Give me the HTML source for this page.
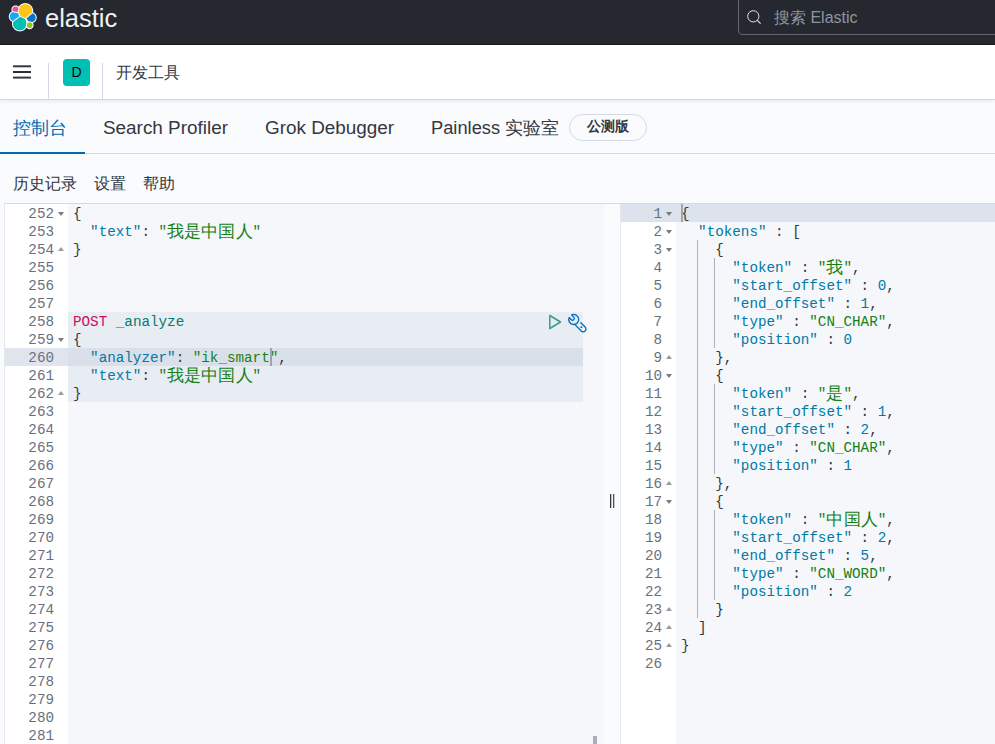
<!DOCTYPE html>
<html><head><meta charset="utf-8">
<style>
*{box-sizing:border-box;margin:0;padding:0}
html,body{width:995px;height:744px;overflow:hidden;background:#fafbfd;font-family:"Liberation Sans",sans-serif;color:#343741}
.abs{position:absolute}
#top{position:absolute;left:0;top:0;width:995px;height:45px;background:#25282f;border-bottom:1px solid #1a1c21}
#logo{position:absolute;left:8px;top:3px;width:30px;height:30px}
#brand{position:absolute;left:45px;top:3px;font-size:25.5px;color:#f0f0f0;line-height:30px;letter-spacing:0px}
#search{position:absolute;left:738px;top:-4px;width:270px;height:39px;border:1px solid #62666e;border-radius:4px;background:#25282f;box-shadow:inset 0 5px 0 -4px #34373f}
#search svg{position:absolute;left:8px;top:13px}
#search span{position:absolute;left:35px;top:10.5px;font-size:16px;color:#8e95a1;line-height:20px}
#bar{position:absolute;left:0;top:45px;width:995px;height:55px;background:#fff;border-bottom:1px solid #d3dae6;box-shadow:0 1px 4px rgba(0,0,0,.09)}
#ham{position:absolute;left:13px;top:20px;width:18px;height:14px}
#ham i{position:absolute;left:0;width:18px;height:2px;background:#343741;border-radius:1px}
.sep{position:absolute;top:18px;width:1px;height:37px;background:#d3dae6}
#av{position:absolute;left:63px;top:14px;width:27px;height:27px;background:#00bfb3;border-radius:4px;color:#000;font-size:14px;line-height:27px;text-align:center}
#crumb{position:absolute;left:116px;top:18px;font-size:16px;line-height:20px;color:#343741}
#tabs{position:absolute;left:0;top:100px;width:995px;height:54px;border-bottom:1px solid #d3dae6}
.tab{position:absolute;top:16px;font-size:18.9px;line-height:24px;color:#343741;white-space:nowrap}
.tab.sel{color:#006bb4}
#uline{position:absolute;left:0;top:52px;width:85px;height:2px;background:#006bb4}
#badge{position:absolute;left:569px;top:14px;width:78px;height:27px;border:1px solid #d3dae6;border-radius:14px;font-size:13.5px;font-weight:bold;line-height:24px;text-align:center;color:#343741;background:#fafbfd}
.sub{position:absolute;top:174px;font-size:16px;line-height:20px;color:#343741}
#ed{position:absolute;left:4px;top:203px;width:991px;height:541px;border-top:1px solid #d3dae6;border-left:1px solid #e3e7ee}
#lgut{position:absolute;left:5px;top:204px;width:63px;height:540px;background:#fff}
#lcon{position:absolute;left:68px;top:204px;width:536px;height:540px;background:#f5f7fa;overflow:hidden}
#mid{position:absolute;left:604px;top:204px;width:16px;height:540px;background:#fafbfd}
#rgut{position:absolute;left:621px;top:204px;width:55px;height:540px;background:#fff}
#rb{position:absolute;left:620px;top:204px;width:1px;height:540px;background:#e3e7ee}
#rcon{position:absolute;left:676px;top:204px;width:319px;height:540px;background:#f5f7fa;overflow:hidden}
.mono{font-family:"Liberation Mono",monospace;font-size:14.25px}
.gl{position:absolute;left:0;width:100%;height:18px;line-height:18px;text-align:right;color:#69707d;font-family:"Liberation Mono",monospace;font-size:14.25px}
.gl{padding-right:14px}

.gl b{position:absolute;right:4px;top:7px;width:0;height:0;border-left:3px solid transparent;border-right:3px solid transparent}
.gl b.fd{border-top:4px solid #7b7b7b}
.gl b.fu{border-bottom:4px solid #9a9a9a;top:6px}
.ln{position:absolute;left:5px;height:18px;line-height:18px;white-space:pre;font-family:"Liberation Mono",monospace;font-size:14.25px;color:#343741}
.w{font-style:normal;display:inline-block;width:17.1px;text-align:center;font-size:16.5px;line-height:18px;vertical-align:top;position:relative;top:1px}
.k{color:#0079a5}
.s{color:#168016}
.p{color:#343741}
.n{color:#0079a5}
.m{color:#cc0c60}
.u{color:#017d73}
.cur{display:inline-block;width:0;height:18px;vertical-align:top;margin-top:-1px;position:relative}.cur:after{content:"";position:absolute;left:0;top:0;width:2px;height:18px;background:#9ea4ad}
.ig{position:absolute;width:1px;background:#abb2bd;margin-left:4px}
#reqhl{position:absolute;left:68px;top:312px;width:515px;height:90px;background:#e8ecf3}
#acthl{position:absolute;left:5px;top:348px;width:578px;height:18px;background:linear-gradient(to right,#e0e5ed 0,#e0e5ed 63px,#d9e0e9 63px)}
#r1hl{position:absolute;left:621px;top:204px;width:374px;height:18px;background:#dde3ec}
</style></head><body>
<div id="top">
 <svg class="abs" style="left:0;top:0" width="45" height="40" viewBox="0 0 45 40"><path d="M11.82 11.41 L11.42 11.65 L11.34 11.71 L10.96 11.99 L10.88 12.05 L10.53 12.36 L10.46 12.43 L10.15 12.78 L10.09 12.86 L9.81 13.24 L9.75 13.32 L9.51 13.72 L9.46 13.81 L9.26 14.24 L9.22 14.33 L9.07 14.77 L9.04 14.86 L8.92 15.32 L8.90 15.42 L8.83 15.88 L8.82 15.98 L8.80 16.45 L8.80 16.55 L8.82 17.02 L8.83 17.12 L8.90 17.58 L8.92 17.68 L9.04 18.14 L9.07 18.23 L9.22 18.67 L9.26 18.76 L9.46 19.19 L9.51 19.28 L9.75 19.68 L9.81 19.76 L10.09 20.14 L10.15 20.22 L10.46 20.57 L10.53 20.64 L10.88 20.95 L10.96 21.01 L11.34 21.29 L11.42 21.35 L11.82 21.59 L11.91 21.64 L12.22 21.78 L12.16 22.03 L12.14 22.13 L12.04 22.79 L12.03 22.88 L12.00 23.55 L12.00 23.65 L12.03 24.32 L12.04 24.41 L12.14 25.07 L12.16 25.17 L12.32 25.82 L12.35 25.91 L12.58 26.54 L12.61 26.63 L12.90 27.23 L12.95 27.32 L13.29 27.89 L13.34 27.97 L13.74 28.51 L13.80 28.59 L14.25 29.08 L14.32 29.15 L14.81 29.60 L14.89 29.66 L15.43 30.06 L15.51 30.11 L16.08 30.45 L16.17 30.50 L16.77 30.79 L16.86 30.82 L17.49 31.05 L17.58 31.08 L18.23 31.24 L18.33 31.26 L18.99 31.36 L19.08 31.37 L19.75 31.40 L19.85 31.40 L20.52 31.37 L20.61 31.36 L21.27 31.26 L21.37 31.24 L22.02 31.08 L22.11 31.05 L22.74 30.82 L22.83 30.79 L23.43 30.50 L23.52 30.45 L24.09 30.11 L24.17 30.06 L24.71 29.66 L24.79 29.60 L25.28 29.15 L25.35 29.08 L25.80 28.59 L25.86 28.51 L26.26 27.97 L26.31 27.89 L26.45 27.66 L26.48 27.70 L26.54 27.77 L26.74 27.99 L26.81 28.06 L27.03 28.26 L27.10 28.32 L27.34 28.50 L27.42 28.55 L27.67 28.70 L27.76 28.75 L28.02 28.88 L28.12 28.91 L28.39 29.01 L28.49 29.04 L28.77 29.11 L28.87 29.13 L29.16 29.17 L29.26 29.18 L29.55 29.20 L29.65 29.20 L29.94 29.18 L30.04 29.17 L30.33 29.13 L30.43 29.11 L30.71 29.04 L30.81 29.01 L31.08 28.91 L31.18 28.88 L31.44 28.75 L31.53 28.70 L31.78 28.55 L31.86 28.50 L32.10 28.32 L32.17 28.26 L32.39 28.06 L32.46 27.99 L32.66 27.77 L32.72 27.70 L32.90 27.46 L32.95 27.38 L33.10 27.13 L33.15 27.04 L33.28 26.78 L33.31 26.68 L33.41 26.41 L33.44 26.31 L33.51 26.03 L33.53 25.93 L33.57 25.64 L33.58 25.54 L33.60 25.25 L33.60 25.15 L33.58 24.86 L33.57 24.76 L33.53 24.47 L33.51 24.37 L33.44 24.09 L33.41 23.99 L33.31 23.72 L33.28 23.62 L33.15 23.36 L33.10 23.27 L32.95 23.02 L32.90 22.94 L32.83 22.85 L32.84 22.85 L33.26 22.70 L33.35 22.66 L33.75 22.47 L33.84 22.43 L34.21 22.20 L34.30 22.14 L34.65 21.88 L34.73 21.82 L35.05 21.52 L35.12 21.45 L35.42 21.13 L35.48 21.05 L35.74 20.70 L35.80 20.61 L36.03 20.24 L36.07 20.15 L36.26 19.75 L36.30 19.66 L36.45 19.24 L36.48 19.15 L36.58 18.72 L36.60 18.62 L36.67 18.19 L36.68 18.09 L36.70 17.65 L36.70 17.55 L36.68 17.11 L36.67 17.01 L36.60 16.58 L36.58 16.48 L36.48 16.05 L36.45 15.96 L36.30 15.54 L36.26 15.45 L36.07 15.05 L36.03 14.96 L35.80 14.59 L35.74 14.50 L35.48 14.15 L35.42 14.07 L35.12 13.75 L35.05 13.68 L34.73 13.38 L34.65 13.32 L34.30 13.06 L34.21 13.00 L33.84 12.77 L33.75 12.73 L33.35 12.54 L33.26 12.50 L33.07 12.43 L33.16 11.82 L33.17 11.73 L33.20 11.05 L33.20 10.95 L33.17 10.27 L33.16 10.18 L33.06 9.51 L33.04 9.41 L32.87 8.75 L32.84 8.66 L32.62 8.02 L32.58 7.93 L32.29 7.32 L32.24 7.23 L31.89 6.65 L31.84 6.57 L31.44 6.03 L31.37 5.95 L30.92 5.45 L30.85 5.38 L30.35 4.93 L30.27 4.86 L29.73 4.46 L29.65 4.41 L29.07 4.06 L28.98 4.01 L28.37 3.72 L28.28 3.68 L27.64 3.46 L27.55 3.43 L26.89 3.26 L26.79 3.24 L26.12 3.14 L26.03 3.13 L25.35 3.10 L25.25 3.10 L24.57 3.13 L24.48 3.14 L23.81 3.24 L23.71 3.26 L23.05 3.43 L22.96 3.46 L22.32 3.68 L22.23 3.72 L21.62 4.01 L21.53 4.06 L20.95 4.41 L20.87 4.46 L20.33 4.86 L20.25 4.93 L19.75 5.38 L19.68 5.45 L19.23 5.95 L19.16 6.03 L18.76 6.57 L18.71 6.65 L18.66 6.73 L18.60 6.67 L18.53 6.60 L18.30 6.39 L18.23 6.32 L17.97 6.14 L17.89 6.08 L17.62 5.92 L17.54 5.87 L17.25 5.74 L17.16 5.70 L16.87 5.60 L16.77 5.57 L16.47 5.49 L16.37 5.47 L16.06 5.43 L15.96 5.42 L15.65 5.40 L15.55 5.40 L15.24 5.42 L15.14 5.43 L14.83 5.47 L14.73 5.49 L14.43 5.57 L14.33 5.60 L14.04 5.70 L13.95 5.74 L13.66 5.87 L13.58 5.92 L13.31 6.08 L13.23 6.14 L12.97 6.32 L12.90 6.39 L12.67 6.60 L12.60 6.67 L12.39 6.90 L12.32 6.97 L12.14 7.23 L12.08 7.31 L11.92 7.58 L11.87 7.66 L11.74 7.95 L11.70 8.04 L11.60 8.33 L11.57 8.43 L11.49 8.73 L11.47 8.83 L11.43 9.14 L11.42 9.24 L11.40 9.55 L11.40 9.65 L11.42 9.96 L11.43 10.06 L11.47 10.37 L11.49 10.47 L11.57 10.77 L11.60 10.87 L11.70 11.16 L11.74 11.25 L11.82 11.41Z" fill="#fff"/><path d="M17.38 6.94 L17.11 6.78 L16.82 6.64 L16.53 6.54 L16.22 6.46 L15.91 6.42 L15.60 6.40 L15.29 6.42 L14.98 6.46 L14.67 6.54 L14.38 6.64 L14.09 6.78 L13.82 6.94 L13.57 7.13 L13.34 7.34 L13.13 7.57 L12.94 7.82 L12.78 8.09 L12.64 8.38 L12.54 8.67 L12.46 8.98 L12.42 9.29 L12.40 9.60 L12.42 9.91 L12.46 10.22 L12.54 10.53 L12.64 10.82 L12.78 11.11 L12.89 11.30 L17.72 12.00 L17.78 11.94 L18.35 7.98 L18.26 7.82 L18.07 7.57 L17.86 7.34 L17.63 7.13 L17.38 6.94Z" fill="#f04e98"/><path d="M31.39 7.75 L31.04 7.17 L30.63 6.62 L30.18 6.12 L29.68 5.67 L29.13 5.26 L28.55 4.91 L27.94 4.63 L27.30 4.40 L26.65 4.23 L25.98 4.13 L25.30 4.10 L24.62 4.13 L23.95 4.23 L23.30 4.40 L22.66 4.63 L22.05 4.91 L21.47 5.26 L20.92 5.67 L20.42 6.12 L19.97 6.62 L19.56 7.17 L19.46 7.35 L18.71 12.48 L20.47 15.90 L25.02 17.89 L25.30 17.90 L25.82 17.87 L32.08 12.28 L32.17 11.68 L32.20 11.00 L32.17 10.32 L32.07 9.65 L31.90 9.00 L31.67 8.36 L31.39 7.75Z" fill="#fec514"/><path d="M12.34 12.27 L11.93 12.51 L11.55 12.79 L11.21 13.11 L10.89 13.45 L10.61 13.83 L10.37 14.24 L10.17 14.66 L10.01 15.11 L9.89 15.56 L9.82 16.03 L9.80 16.50 L9.82 16.97 L9.89 17.44 L10.01 17.89 L10.17 18.34 L10.37 18.76 L10.61 19.17 L10.89 19.55 L11.21 19.89 L11.55 20.21 L11.93 20.49 L12.34 20.73 L12.76 20.93 L12.87 20.97 L19.39 16.20 L19.38 16.03 L19.36 15.94 L17.87 13.03 L12.40 12.24 L12.34 12.27Z" fill="#1ba9f5"/><path d="M35.17 15.48 L34.94 15.10 L34.68 14.75 L34.38 14.42 L34.05 14.12 L33.70 13.86 L33.32 13.63 L32.92 13.44 L32.51 13.29 L32.46 13.28 L26.77 18.37 L26.79 18.48 L26.89 18.91 L27.04 19.32 L27.23 19.72 L27.46 20.10 L27.72 20.45 L28.02 20.78 L28.35 21.08 L28.57 21.24 L32.15 22.00 L32.51 21.91 L32.92 21.76 L33.32 21.57 L33.70 21.34 L34.05 21.08 L34.38 20.78 L34.68 20.45 L34.94 20.10 L35.17 19.72 L35.36 19.32 L35.51 18.91 L35.61 18.48 L35.68 18.04 L35.70 17.60 L35.68 17.16 L35.61 16.72 L35.51 16.29 L35.36 15.88 L35.17 15.48Z" fill="#0077cc"/><path d="M25.80 20.39 L25.45 19.82 L25.06 19.29 L24.62 18.80 L20.17 16.86 L13.21 21.96 L13.13 22.27 L13.03 22.93 L13.00 23.60 L13.03 24.27 L13.13 24.93 L13.29 25.57 L13.52 26.20 L13.80 26.81 L14.15 27.38 L14.54 27.91 L14.99 28.41 L15.49 28.86 L16.02 29.25 L16.59 29.60 L17.20 29.88 L17.83 30.11 L18.47 30.27 L19.13 30.37 L19.80 30.40 L20.47 30.37 L21.13 30.27 L21.77 30.11 L22.40 29.88 L23.01 29.60 L23.58 29.25 L24.11 28.86 L24.61 28.41 L25.06 27.91 L25.45 27.38 L25.66 27.03 L26.45 22.20 L26.31 21.63 L26.08 21.00 L25.80 20.39Z" fill="#00bfb3"/><path d="M32.25 23.79 L32.09 23.53 L31.92 23.30 L31.72 23.08 L31.51 22.88 L28.79 22.31 L28.73 22.33 L28.45 22.43 L28.19 22.55 L27.93 22.71 L27.70 22.88 L27.48 23.08 L27.29 23.29 L26.80 26.27 L26.83 26.35 L26.95 26.61 L27.11 26.87 L27.28 27.10 L27.48 27.32 L27.70 27.52 L27.93 27.69 L28.19 27.85 L28.45 27.97 L28.73 28.07 L29.01 28.14 L29.31 28.19 L29.60 28.20 L29.89 28.19 L30.19 28.14 L30.47 28.07 L30.75 27.97 L31.01 27.85 L31.27 27.69 L31.50 27.52 L31.72 27.32 L31.92 27.10 L32.09 26.87 L32.25 26.61 L32.37 26.35 L32.47 26.07 L32.54 25.79 L32.59 25.49 L32.60 25.20 L32.59 24.91 L32.54 24.61 L32.47 24.33 L32.37 24.05 L32.25 23.79Z" fill="#93c90e"/></svg>
 <div id="brand">elastic</div>
 <div id="search">
  <svg width="16" height="16" viewBox="0 0 16 16"><circle cx="6.3" cy="6.3" r="5.6" fill="none" stroke="#dfe5ef" stroke-width="1"/><path d="M10.3 10.3 L13.6 13.6" stroke="#dfe5ef" stroke-width="1.1"/></svg>
  <span>搜索 Elastic</span>
 </div>
</div>
<div id="bar">
 <svg class="abs" style="left:13px;top:18px" width="18" height="16" viewBox="0 0 18 16"><rect x="0" y="2.3" width="18" height="2" fill="#343741"/><rect x="0" y="8" width="18" height="2" fill="#2b2e36"/><rect x="0" y="13.6" width="18" height="2" fill="#343741"/></svg>
 <div class="sep" style="left:48px"></div>
 <div id="av">D</div>
 <div class="sep" style="left:102px"></div>
 <div id="crumb">开发工具</div>
</div>
<div id="tabs">
 <div class="tab sel" style="left:13px;font-size:18.2px">控制台</div>
 <div class="tab" style="left:103px">Search Profiler</div>
 <div class="tab" style="left:265px">Grok Debugger</div>
 <div class="tab" style="left:431px;font-size:18.3px">Painless</div><div class="tab" style="left:505px;font-size:17.8px">实验室</div>
 <div id="badge">公测版</div>
 <div id="uline"></div>
</div>
<div class="sub" style="left:13px">历史记录</div>
<div class="sub" style="left:94px">设置</div>
<div class="sub" style="left:143px">帮助</div>
<div id="ed"></div>
<div id="lgut"></div>
<div id="lcon"></div>
<div id="mid"></div>
<div id="rb"></div>
<div id="rgut"></div>
<div id="rcon"></div>
<div id="reqhl"></div>
<div id="acthl"></div>
<div id="r1hl"></div>
<div class="abs" style="left:5px;top:204px;width:63px;height:540px"><div class="gl" style="top:1px">252<b class="fd"></b></div><div class="gl" style="top:19px">253</div><div class="gl" style="top:37px">254<b class="fu"></b></div><div class="gl" style="top:55px">255</div><div class="gl" style="top:73px">256</div><div class="gl" style="top:91px">257</div><div class="gl" style="top:109px">258</div><div class="gl" style="top:127px">259<b class="fd"></b></div><div class="gl" style="top:145px">260</div><div class="gl" style="top:163px">261</div><div class="gl" style="top:181px">262<b class="fu"></b></div><div class="gl" style="top:199px">263</div><div class="gl" style="top:217px">264</div><div class="gl" style="top:235px">265</div><div class="gl" style="top:253px">266</div><div class="gl" style="top:271px">267</div><div class="gl" style="top:289px">268</div><div class="gl" style="top:307px">269</div><div class="gl" style="top:325px">270</div><div class="gl" style="top:343px">271</div><div class="gl" style="top:361px">272</div><div class="gl" style="top:379px">273</div><div class="gl" style="top:397px">274</div><div class="gl" style="top:415px">275</div><div class="gl" style="top:433px">276</div><div class="gl" style="top:451px">277</div><div class="gl" style="top:469px">278</div><div class="gl" style="top:487px">279</div><div class="gl" style="top:505px">280</div><div class="gl" style="top:523px">281</div></div>
<div class="abs" style="left:68px;top:204px;width:536px;height:540px;overflow:hidden"><div class="ln" style="top:1px"><span class="p">{</span></div><div class="ln" style="top:19px">  <span class="k">"text"</span><span class="p">: </span><span class="s">"<i class="w">我</i><i class="w">是</i><i class="w">中</i><i class="w">国</i><i class="w">人</i>"</span></div><div class="ln" style="top:37px"><span class="p">}</span></div><div class="ln" style="top:109px"><span class="m">POST</span> <span class="u">_analyze</span></div><div class="ln" style="top:127px"><span class="p">{</span></div><div class="ln" style="top:145px">  <span class="k">"analyzer"</span><span class="p">: </span><span class="s">"ik_smart</span><span class="cur"></span><span class="s">"</span><span class="p">,</span></div><div class="ln" style="top:163px">  <span class="k">"text"</span><span class="p">: </span><span class="s">"<i class="w">我</i><i class="w">是</i><i class="w">中</i><i class="w">国</i><i class="w">人</i>"</span></div><div class="ln" style="top:181px"><span class="p">}</span></div></div>
<div class="abs" style="left:621px;top:204px;width:55px;height:540px"><div class="gl" style="top:1px">1<b class="fd"></b></div><div class="gl" style="top:19px">2<b class="fd"></b></div><div class="gl" style="top:37px">3<b class="fd"></b></div><div class="gl" style="top:55px">4</div><div class="gl" style="top:73px">5</div><div class="gl" style="top:91px">6</div><div class="gl" style="top:109px">7</div><div class="gl" style="top:127px">8</div><div class="gl" style="top:145px">9<b class="fu"></b></div><div class="gl" style="top:163px">10<b class="fd"></b></div><div class="gl" style="top:181px">11</div><div class="gl" style="top:199px">12</div><div class="gl" style="top:217px">13</div><div class="gl" style="top:235px">14</div><div class="gl" style="top:253px">15</div><div class="gl" style="top:271px">16<b class="fu"></b></div><div class="gl" style="top:289px">17<b class="fd"></b></div><div class="gl" style="top:307px">18</div><div class="gl" style="top:325px">19</div><div class="gl" style="top:343px">20</div><div class="gl" style="top:361px">21</div><div class="gl" style="top:379px">22</div><div class="gl" style="top:397px">23<b class="fu"></b></div><div class="gl" style="top:415px">24<b class="fu"></b></div><div class="gl" style="top:433px">25<b class="fu"></b></div><div class="gl" style="top:451px">26</div></div>
<div class="abs" style="left:676px;top:204px;width:319px;height:540px;overflow:hidden"><div class="ig" style="left:17.10px;top:36px;height:378px"></div><div class="ig" style="left:34.20px;top:54px;height:90px"></div><div class="ig" style="left:34.20px;top:180px;height:90px"></div><div class="ig" style="left:34.20px;top:306px;height:90px"></div><div class="ln" style="top:1px"><span class="cur"></span><span class="p">{</span></div><div class="ln" style="top:19px">  <span class="k">"tokens"</span><span class="p"> : [</span></div><div class="ln" style="top:37px">    <span class="p">{</span></div><div class="ln" style="top:55px">      <span class="k">"token"</span><span class="p"> : </span><span class="s">"<i class="w">我</i>"</span><span class="p">,</span></div><div class="ln" style="top:73px">      <span class="k">"start_offset"</span><span class="p"> : </span><span class="n">0</span><span class="p">,</span></div><div class="ln" style="top:91px">      <span class="k">"end_offset"</span><span class="p"> : </span><span class="n">1</span><span class="p">,</span></div><div class="ln" style="top:109px">      <span class="k">"type"</span><span class="p"> : </span><span class="s">"CN_CHAR"</span><span class="p">,</span></div><div class="ln" style="top:127px">      <span class="k">"position"</span><span class="p"> : </span><span class="n">0</span></div><div class="ln" style="top:145px">    <span class="p">},</span></div><div class="ln" style="top:163px">    <span class="p">{</span></div><div class="ln" style="top:181px">      <span class="k">"token"</span><span class="p"> : </span><span class="s">"<i class="w">是</i>"</span><span class="p">,</span></div><div class="ln" style="top:199px">      <span class="k">"start_offset"</span><span class="p"> : </span><span class="n">1</span><span class="p">,</span></div><div class="ln" style="top:217px">      <span class="k">"end_offset"</span><span class="p"> : </span><span class="n">2</span><span class="p">,</span></div><div class="ln" style="top:235px">      <span class="k">"type"</span><span class="p"> : </span><span class="s">"CN_CHAR"</span><span class="p">,</span></div><div class="ln" style="top:253px">      <span class="k">"position"</span><span class="p"> : </span><span class="n">1</span></div><div class="ln" style="top:271px">    <span class="p">},</span></div><div class="ln" style="top:289px">    <span class="p">{</span></div><div class="ln" style="top:307px">      <span class="k">"token"</span><span class="p"> : </span><span class="s">"<i class="w">中</i><i class="w">国</i><i class="w">人</i>"</span><span class="p">,</span></div><div class="ln" style="top:325px">      <span class="k">"start_offset"</span><span class="p"> : </span><span class="n">2</span><span class="p">,</span></div><div class="ln" style="top:343px">      <span class="k">"end_offset"</span><span class="p"> : </span><span class="n">5</span><span class="p">,</span></div><div class="ln" style="top:361px">      <span class="k">"type"</span><span class="p"> : </span><span class="s">"CN_WORD"</span><span class="p">,</span></div><div class="ln" style="top:379px">      <span class="k">"position"</span><span class="p"> : </span><span class="n">2</span></div><div class="ln" style="top:397px">    <span class="p">}</span></div><div class="ln" style="top:415px">  <span class="p">]</span></div><div class="ln" style="top:433px"><span class="p">}</span></div></div>
<svg class="abs" style="left:548px;top:314px" width="14" height="16" viewBox="0 0 14 16"><path d="M1.8 1.5 L12.5 8 L1.8 14.5 Z" fill="none" stroke="#3a9b8e" stroke-width="1.5" stroke-linejoin="round"/></svg>
<svg class="abs" style="left:567px;top:313px" width="22" height="22" viewBox="0 0 22 22"><path d="M4.67 1.93 A5.00 5.00 0 1 1 2.13 4.47 L4.33 6.67 A1.80 1.80 0 0 0 6.87 4.13 Z" fill="none" stroke="#006bb4" stroke-width="1.30" stroke-linejoin="round"/><path d="M7.71 11.40 L14.23 17.92 A2.75 2.75 0 0 0 18.12 14.03 L13.84 9.75" fill="none" stroke="#006bb4" stroke-width="1.30" stroke-linecap="round"/><circle cx="14.34" cy="14.14" r="0.95" fill="#006bb4"/></svg>
<div class="abs" style="left:610px;top:494px;width:1px;height:14px;background:#343741;border-radius:1px;box-shadow:0.3px 0 0 #343741"></div>
<div class="abs" style="left:613px;top:494px;width:1px;height:14px;background:#4a4e57;border-radius:1px;box-shadow:0.3px 0 0 #4a4e57"></div>
<div class="abs" style="left:593px;top:736px;width:4px;height:8px;background:#aab0ba"></div>
</body></html>
